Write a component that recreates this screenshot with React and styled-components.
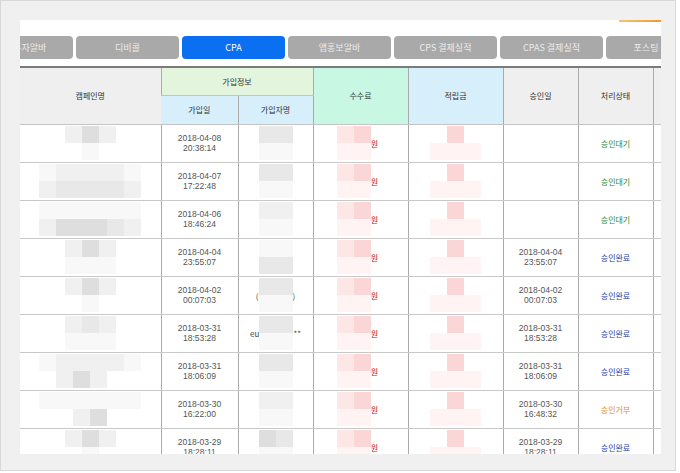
import React from 'react';
import styled, { createGlobalStyle } from 'styled-components';

const GlobalStyle = createGlobalStyle`
  body {
    margin: 0;
    background: #ffffff;
    font-family: "Noto Sans CJK KR", "Noto Sans", sans-serif;
  }
`;

const Frame = styled.div`
  width: 676px;
  height: 471px;
  box-sizing: border-box;
  border: 1px solid #d8d8d8;
  background: #f0f0f0;
  padding: 19px 0 0 19px;
`;

const Panel = styled.div`
  width: 641px;
  height: 434px;
  background: #ffffff;
  overflow: hidden;
`;

const TopBar = styled.div`
  height: 16px;
  display: flex;
  justify-content: flex-end;
`;

const Indicator = styled.div`
  width: 42px;
  height: 2px;
  background: linear-gradient(90deg, #f7c27a, #f29a2e);
`;

const TabStrip = styled.div`
  overflow: hidden;
`;

const TabRow = styled.div`
  display: flex;
  gap: 3px;
  margin-left: -50px;
`;

const Tab = styled.div`
  flex: none;
  width: ${p => p.$w || 103}px;
  height: 23px;
  border-radius: 4px;
  background: ${p => (p.$active ? '#0b6ff2' : '#a9a9a9')};
  color: ${p => (p.$active ? '#ffffff' : '#ececec')};
  font-size: 9px;
  display: flex;
  align-items: center;
  justify-content: center;
  white-space: nowrap;
`;

const Table = styled.table`
  margin-top: 7px;
  width: 700px;
  table-layout: fixed;
  border-collapse: collapse;
  border-top: 2px solid #7b7b7b;
  font-size: 8px;
  color: #333;
`;

const Th = styled.th`
  font-weight: normal;
  background: ${p => p.$bg || '#efefef'};
  border-left: 1px solid #ababab;
  border-bottom: 1px solid #c4c4c4;
  padding: 0;
  &:first-child {
    border-left: none;
  }
`;

const Row = styled.tr`
  height: ${p => p.$h}px;
`;

const Td = styled.td`
  border-left: 1px solid #ababab;
  border-bottom: 1px solid #c8c8c8;
  padding: 0;
  text-align: center;
  vertical-align: middle;
  &:first-child {
    border-left: none;
  }
`;

const DateText = styled.div`
  font-family: "Liberation Sans", "Noto Sans CJK KR", sans-serif;
  font-size: 8.5px;
  line-height: 10px;
  color: #555;
`;

const Status = styled.span`
  font-size: 8px;
  color: ${p => p.$color};
`;

const Inline = styled.div`
  display: flex;
  align-items: center;
  justify-content: center;
  font-size: 8px;
  color: ${p => p.$color || '#444'};
  margin-left: ${p => p.$shift || 0}px;
`;

const MosaicGrid = styled.div`
  display: inline-grid;
  grid-template-columns: repeat(${p => p.$cols}, 17px);
  grid-auto-rows: 17px;
  vertical-align: middle;
`;

const Block = styled.div`
  background: ${p => p.$c};
`;

const GRAY = { '.': 'transparent', a: '#f8f8f8', b: '#f0f0f0', c: '#e8e8e8', d: '#dedede' };
const PINK = { '.': 'transparent', a: '#fff3f3', b: '#fde6e6', c: '#fad6d6', d: '#f7c8c8' };

const Mosaic = ({ rows, palette = GRAY }) => (
  <MosaicGrid $cols={rows[0].length}>
    {rows.join('').split('').map((ch, i) => (
      <Block key={i} $c={palette[ch]} />
    ))}
  </MosaicGrid>
);

const STATUS = {
  wait: ['승인대기', '#2e8b2e'],
  done: ['승인완료', '#2340b0'],
  deny: ['승인거부', '#e2902a'],
};

const rows = [
  { camp: ['.bdb.', '..a..'], join: ['2018-04-08', '20:38:14'], user: ['cc', 'aa'], ok: null, st: 'wait' },
  { camp: ['abbbba', 'bccccb'], join: ['2018-04-07', '17:22:48'], user: ['cc', 'aa'], ok: null, st: 'wait' },
  { camp: ['aaaaaa', 'bdddcb'], join: ['2018-04-06', '18:46:24'], user: ['bb', 'aa'], ok: null, st: 'wait' },
  { camp: ['.bdb.', '.aaa.'], join: ['2018-04-04', '23:55:07'], user: ['aa', 'cc'], ok: ['2018-04-04', '23:55:07'], st: 'done' },
  { camp: ['.bdb.', '..a..'], join: ['2018-04-02', '00:07:03'], user: ['cc', 'aa'], ok: ['2018-04-02', '00:07:03'], st: 'done', pre: '(', post: ')' },
  { camp: ['.bcb.', '.aaa.'], join: ['2018-03-31', '18:53:28'], user: ['cc', 'aa'], ok: ['2018-03-31', '18:53:28'], st: 'done', pre: 'eu', post: '**' },
  { camp: ['abbbba', '.bdb..'], join: ['2018-03-31', '18:06:09'], user: ['cc', 'aa'], ok: ['2018-03-31', '18:06:09'], st: 'done' },
  { camp: ['aaaaaa', '..bd..'], join: ['2018-03-30', '16:22:00'], user: ['bb', 'aa'], ok: ['2018-03-30', '16:48:32'], st: 'deny' },
  { camp: ['.bdb.', '..a..'], join: ['2018-03-29', '18:28:11'], user: ['dc', 'aa'], ok: ['2018-03-29', '18:28:11'], st: 'done' },
];

const tabs = [
  { label: '주식투자알바' },
  { label: '디비콜' },
  { label: 'CPA', active: true },
  { label: '앱홍보알바' },
  { label: 'CPS 결제실적' },
  { label: 'CPAS 결제실적' },
  { label: '포스팅', w: 80 },
];

const DateCell = ({ value }) =>
  value ? (
    <DateText>
      {value[0]}
      <br />
      {value[1]}
    </DateText>
  ) : null;

const App = () => {
  return (
    <>
      <GlobalStyle />
      <Frame>
        <Panel>
          <TopBar>
            <Indicator />
          </TopBar>
          <TabStrip>
            <TabRow>
              {tabs.map(t => (
                <Tab key={t.label} $active={t.active} $w={t.w}>{t.label}</Tab>
              ))}
            </TabRow>
          </TabStrip>
          <Table>
            <colgroup>
              <col style={{ width: 141 }} />
              <col style={{ width: 77 }} />
              <col style={{ width: 75 }} />
              <col style={{ width: 95 }} />
              <col style={{ width: 95 }} />
              <col style={{ width: 75 }} />
              <col style={{ width: 75 }} />
              <col style={{ width: 67 }} />
            </colgroup>
            <thead>
              <Row $h={28}>
                <Th rowSpan={2}>캠페인명</Th>
                <Th colSpan={2} $bg="#e3f5dc">가입정보</Th>
                <Th rowSpan={2} $bg="#c8f8e3">수수료</Th>
                <Th rowSpan={2} $bg="#d6effb">적립금</Th>
                <Th rowSpan={2}>승인일</Th>
                <Th rowSpan={2}>처리상태</Th>
                <Th rowSpan={2}></Th>
              </Row>
              <Row $h={29}>
                <Th $bg="#d7effb">가입일</Th>
                <Th $bg="#d7effb">가입자명</Th>
              </Row>
            </thead>
            <tbody>
              {rows.map((r, i) => (
                <Row key={i} $h={38}>
                  <Td>
                    <Mosaic rows={r.camp} />
                  </Td>
                  <Td>
                    <DateCell value={r.join} />
                  </Td>
                  <Td>
                    <Inline>
                      {r.pre}
                      <Mosaic rows={r.user} />
                      {r.post}
                    </Inline>
                  </Td>
                  <Td>
                    <Inline $color="#c01818" $shift={-6}>
                      <Mosaic rows={['bc', 'aa']} palette={PINK} />
                      원
                    </Inline>
                  </Td>
                  <Td>
                    <Mosaic rows={['.c.', 'aaa']} palette={PINK} />
                  </Td>
                  <Td>
                    <DateCell value={r.ok} />
                  </Td>
                  <Td>
                    <Status $color={STATUS[r.st][1]}>{STATUS[r.st][0]}</Status>
                  </Td>
                  <Td></Td>
                </Row>
              ))}
            </tbody>
          </Table>
        </Panel>
      </Frame>
    </>
  );
};

export default App;
